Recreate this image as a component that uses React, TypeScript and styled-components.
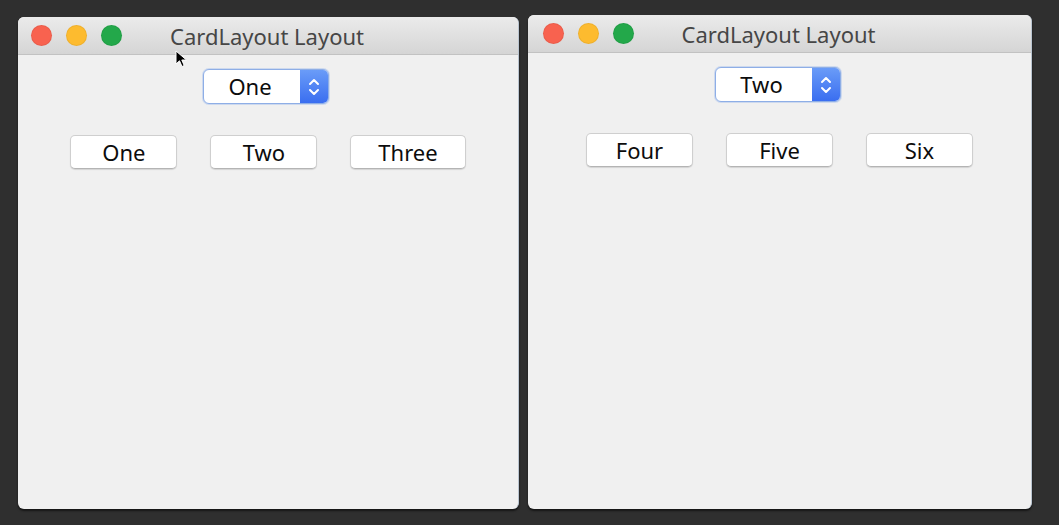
import React from "react";
import styled, { createGlobalStyle } from "styled-components";

const GlobalStyle = createGlobalStyle`
  html, body {
    margin: 0;
    padding: 0;
    background: #2f2f2f;
  }
  * { box-sizing: border-box; }
`;

const Desktop = styled.div`
  position: relative;
  width: 1059px;
  height: 525px;
  display: flex;
  align-items: flex-start;
  gap: 9px;
  padding-left: 18px;
  background: #2f2f2f;
  overflow: hidden;
`;

const Window = styled.div<{ $top: number; $width: number; $height: number }>`
  margin-top: ${(p) => p.$top}px;
  width: ${(p) => p.$width}px;
  height: ${(p) => p.$height}px;
  display: flex;
  flex-direction: column;
  background: #f0f0f0;
  border-radius: 6px;
  overflow: hidden;
  border-right: 1px solid #b9c4d0;
  box-shadow: 0 2px 2px rgba(0, 0, 0, 0.55);
`;

const TitleBar = styled.div`
  height: 38px;
  flex: none;
  display: grid;
  grid-template-columns: 1fr auto 1fr;
  align-items: center;
  background: linear-gradient(#ebebeb, #d5d5d5);
  border-bottom: 1px solid #c2c2c2;
`;

const Lights = styled.div<{ $pad: number }>`
  display: flex;
  gap: 14px;
  align-items: center;
  padding-left: ${(p) => p.$pad}px;
`;

const Light = styled.span<{ $color: string }>`
  width: 21px;
  height: 21px;
  border-radius: 50%;
  background: ${(p) => p.$color};
  box-shadow: inset 0 0 0 1px rgba(0, 0, 0, 0.06);
`;

const Title = styled.div`
  font-family: "Noto Sans", "Open Sans", sans-serif;
  font-size: 22px;
  color: #464646;
  white-space: nowrap;
  transform: translateX(-1px);
`;

const Content = styled.div`
  display: flex;
  flex-direction: column;
  align-items: center;
  padding-top: 14px;
  gap: 31px;
`;

const Combo = styled.div`
  width: 126px;
  height: 35px;
  display: flex;
  border-radius: 6px;
  border: 1px solid #8eaee6;
  box-shadow: 0 0 0 1px rgba(140, 175, 235, 0.35);
  overflow: hidden;
  background: #ffffff;
  transform: translateX(-2px);
`;

const ComboText = styled.div`
  flex: 1;
  display: flex;
  align-items: center;
  justify-content: center;
  font-family: "Noto Sans", "Open Sans", sans-serif;
  font-size: 22px;
  color: #0c0c0c;
  padding-right: 4px;
  padding-bottom: 2px;
`;

const ComboArrow = styled.div`
  width: 28px;
  display: flex;
  align-items: center;
  justify-content: center;
  background: linear-gradient(#6a9cf8, #3a6ef0);
`;

const ButtonRow = styled.div`
  display: flex;
  gap: 33px;
`;

const Button = styled.div`
  min-width: 107px;
  height: 34px;
  padding: 0 27px;
  display: flex;
  align-items: center;
  justify-content: center;
  background: #ffffff;
  border: 1px solid #cfcfcf;
  border-bottom-color: #b4b4b4;
  border-radius: 5px;
  box-shadow: 0 1px 1px rgba(0, 0, 0, 0.12);
  font-family: "Noto Sans", "Open Sans", sans-serif;
  font-size: 22px;
  color: #0c0c0c;
`;

const Cursor = styled.svg`
  position: absolute;
  left: 175px;
  top: 50px;
`;

const Chevrons = () => (
  <svg width="14" height="22" viewBox="0 0 14 22">
    <path d="M3 8 L7 4 L11 8" fill="none" stroke="#fff" strokeWidth="2" strokeLinecap="round" strokeLinejoin="round" />
    <path d="M3 14 L7 18 L11 14" fill="none" stroke="#fff" strokeWidth="2" strokeLinecap="round" strokeLinejoin="round" />
  </svg>
);

type WinProps = {
  top: number;
  width: number;
  height: number;
  lightsPad: number;
  selected: string;
  buttons: string[];
};

const CardWindow = ({ top, width, height, lightsPad, selected, buttons }: WinProps) => (
  <Window $top={top} $width={width} $height={height}>
    <TitleBar>
      <Lights $pad={lightsPad}>
        <Light $color="#f8624f" />
        <Light $color="#fdbb2f" />
        <Light $color="#23a84a" />
      </Lights>
      <Title>CardLayout Layout</Title>
      <span />
    </TitleBar>
    <Content>
      <Combo>
        <ComboText>{selected}</ComboText>
        <ComboArrow>
          <Chevrons />
        </ComboArrow>
      </Combo>
      <ButtonRow>
        {buttons.map((b) => (
          <Button key={b}>{b}</Button>
        ))}
      </ButtonRow>
    </Content>
  </Window>
);

export default function App() {
  return (
    <>
      <GlobalStyle />
      <Desktop>
        <CardWindow top={17} width={501} height={492} lightsPad={13} selected="One" buttons={["One", "Two", "Three"]} />
        <CardWindow top={15} width={504} height={494} lightsPad={15} selected="Two" buttons={["Four", "Five", "Six"]} />
        <Cursor width="14" height="18" viewBox="0 0 14 18">
          <path d="M1 1 L1 14 L4.5 10.8 L7 16.5 L9.2 15.5 L6.8 10 L11.5 10 Z" fill="#000" stroke="#fff" strokeWidth="1" strokeLinejoin="round" />
        </Cursor>
      </Desktop>
    </>
  );
}
